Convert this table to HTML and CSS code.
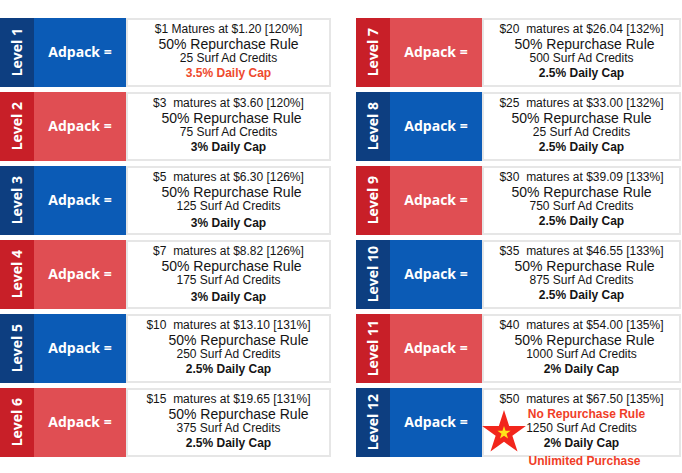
FILE: index.html
```html
<!DOCTYPE html>
<html>
<head>
<meta charset="utf-8">
<link rel="stylesheet" href="styles.css">
</head>
<body>
<div class="page">
  <div class="col col-left">
    <div class="row blue">
      <div class="lvl"><span>Level 1</span></div>
      <div class="adp">Adpack =</div>
      <div class="box">
        <div class="l1">$1 Matures at $1.20 [120%]</div>
        <div class="l2">50% Repurchase Rule</div>
        <div class="l3">25 Surf Ad Credits</div>
        <div class="l4 hot">3.5% Daily Cap</div>
      </div>
    </div>
    <div class="row red">
      <div class="lvl"><span>Level 2</span></div>
      <div class="adp">Adpack =</div>
      <div class="box">
        <div class="l1">$3  matures at $3.60 [120%]</div>
        <div class="l2 shift-s">50% Repurchase Rule</div>
        <div class="l3">75 Surf Ad Credits</div>
        <div class="l4">3% Daily Cap</div>
      </div>
    </div>
    <div class="row blue">
      <div class="lvl"><span>Level 3</span></div>
      <div class="adp">Adpack =</div>
      <div class="box">
        <div class="l1">$5  matures at $6.30 [126%]</div>
        <div class="l2 shift-s">50% Repurchase Rule</div>
        <div class="l3">125 Surf Ad Credits</div>
        <div class="l4 low">3% Daily Cap</div>
      </div>
    </div>
    <div class="row red">
      <div class="lvl"><span>Level 4</span></div>
      <div class="adp">Adpack =</div>
      <div class="box">
        <div class="l1">$7  matures at $8.82 [126%]</div>
        <div class="l2 shift-s">50% Repurchase Rule</div>
        <div class="l3">175 Surf Ad Credits</div>
        <div class="l4 low">3% Daily Cap</div>
      </div>
    </div>
    <div class="row blue">
      <div class="lvl"><span>Level 5</span></div>
      <div class="adp">Adpack =</div>
      <div class="box">
        <div class="l1">$10  matures at $13.10 [131%]</div>
        <div class="l2 shift-l">50% Repurchase Rule</div>
        <div class="l3">250 Surf Ad Credits</div>
        <div class="l4">2.5% Daily Cap</div>
      </div>
    </div>
    <div class="row red">
      <div class="lvl"><span>Level 6</span></div>
      <div class="adp">Adpack =</div>
      <div class="box">
        <div class="l1">$15  matures at $19.65 [131%]</div>
        <div class="l2 shift-l">50% Repurchase Rule</div>
        <div class="l3">375 Surf Ad Credits</div>
        <div class="l4">2.5% Daily Cap</div>
      </div>
    </div>
  </div>
  <div class="col col-right">
    <div class="row red">
      <div class="lvl"><span>Level 7</span></div>
      <div class="adp">Adpack =</div>
      <div class="box">
        <div class="l1">$20  matures at $26.04 [132%]</div>
        <div class="l2 shift-s">50% Repurchase Rule</div>
        <div class="l3">500 Surf Ad Credits</div>
        <div class="l4">2.5% Daily Cap</div>
      </div>
    </div>
    <div class="row blue">
      <div class="lvl"><span>Level 8</span></div>
      <div class="adp">Adpack =</div>
      <div class="box">
        <div class="l1">$25  matures at $33.00 [132%]</div>
        <div class="l2">50% Repurchase Rule</div>
        <div class="l3">25 Surf Ad Credits</div>
        <div class="l4">2.5% Daily Cap</div>
      </div>
    </div>
    <div class="row red">
      <div class="lvl"><span>Level 9</span></div>
      <div class="adp">Adpack =</div>
      <div class="box">
        <div class="l1">$30  matures at $39.09 [133%]</div>
        <div class="l2">50% Repurchase Rule</div>
        <div class="l3">750 Surf Ad Credits</div>
        <div class="l4">2.5% Daily Cap</div>
      </div>
    </div>
    <div class="row blue">
      <div class="lvl"><span>Level 10</span></div>
      <div class="adp">Adpack =</div>
      <div class="box">
        <div class="l1">$35  matures at $46.55 [133%]</div>
        <div class="l2 shift-s">50% Repurchase Rule</div>
        <div class="l3">875 Surf Ad Credits</div>
        <div class="l4">2.5% Daily Cap</div>
      </div>
    </div>
    <div class="row red">
      <div class="lvl"><span>Level 11</span></div>
      <div class="adp">Adpack =</div>
      <div class="box">
        <div class="l1">$40  matures at $54.00 [135%]</div>
        <div class="l2 shift-s">50% Repurchase Rule</div>
        <div class="l3">1000 Surf Ad Credits</div>
        <div class="l4">2% Daily Cap</div>
      </div>
    </div>
    <div class="row blue row-star">
      <div class="lvl"><span>Level 12</span></div>
      <div class="adp">Adpack =</div>
      <div class="box">
        <div class="l1">$50  matures at $67.50 [135%]</div>
        <div class="l2 hot-rule shift-m">No Repurchase Rule</div>
        <div class="l3">1250 Surf Ad Credits</div>
        <div class="l4">2% Daily Cap</div>
        <div class="l5 shift-s">Unlimited Purchase</div>
      </div>
      <svg class="star" width="48" height="48" viewBox="0 0 48 48">
        <polygon fill="#f2261c" points="24,1 29.17,16.89 45.87,16.89 32.36,26.72 37.52,42.61 24,32.79 10.48,42.61 15.64,26.72 2.13,16.89 18.83,16.89"/>
        <polygon fill="#ffe41a" points="24,17.1 25.55,21.87 30.56,21.87 26.51,24.82 28.06,29.58 24,26.64 19.94,29.58 21.49,24.82 17.44,21.87 22.45,21.87"/>
      </svg>
    </div>
  </div>
</div>
</body>
</html>
```
FILE: styles.css
```css
html, body {
  margin: 0;
  padding: 0;
  background: #ffffff;
}

.page {
  display: grid;
  grid-template-columns: 331px 325px;
  column-gap: 25px;
  padding-top: 18px;
  padding-bottom: 16px;
}

.col {
  display: flex;
  flex-direction: column;
  gap: 5px;
}

.row {
  display: flex;
  height: 69px;
  position: relative;
}

.lvl {
  width: 34px;
  flex: none;
  display: flex;
  align-items: center;
  justify-content: center;
}

.lvl span {
  writing-mode: vertical-rl;
  transform: rotate(180deg);
  font-family: "Open Sans", "DejaVu Sans", sans-serif;
  font-weight: 700;
  font-size: 14px;
  line-height: 1;
  color: #ffffff;
  white-space: nowrap;
}

.adp {
  width: 92px;
  flex: none;
  display: flex;
  align-items: center;
  justify-content: center;
  padding-bottom: 3px;
  box-sizing: border-box;
  font-family: "Open Sans", "DejaVu Sans", sans-serif;
  font-weight: 700;
  font-size: 14px;
  color: #ffffff;
}

.blue .lvl { background: #0d3e80; }
.blue .adp { background: #0b5bb6; }
.red .lvl { background: #c81f28; }
.red .adp { background: #e04e53; }

.box {
  flex: 1;
  box-sizing: border-box;
  border: 2px solid #e6e6e6;
  padding-top: 2px;
  background: #ffffff;
  text-align: center;
  font-family: "Liberation Sans", Arial, sans-serif;
  color: #141414;
}

.box > div { white-space: pre; }

.l1 { font-size: 12px; line-height: 15px; }
.l2 { font-size: 14px; line-height: 14px; }
.l3 { font-size: 12px; line-height: 15px; }
.l4 { font-size: 12px; line-height: 15px; font-weight: 700; }
.l4.low { padding-top: 2px; }

.hot { color: #ee4a2e; }
.hot-rule {
  color: #f03d27;
  font-weight: 700;
  font-size: 12px;
  line-height: 14px;
}

.l5 {
  font-size: 12px;
  line-height: 15px;
  font-weight: 700;
  color: #f03d27;
  margin-top: 3px;
}

.shift-s { padding-left: 6px; }
.shift-m { padding-left: 10px; }
.shift-l { padding-left: 20px; }

.star {
  position: absolute;
  left: 124px;
  top: 21px;
}
```
